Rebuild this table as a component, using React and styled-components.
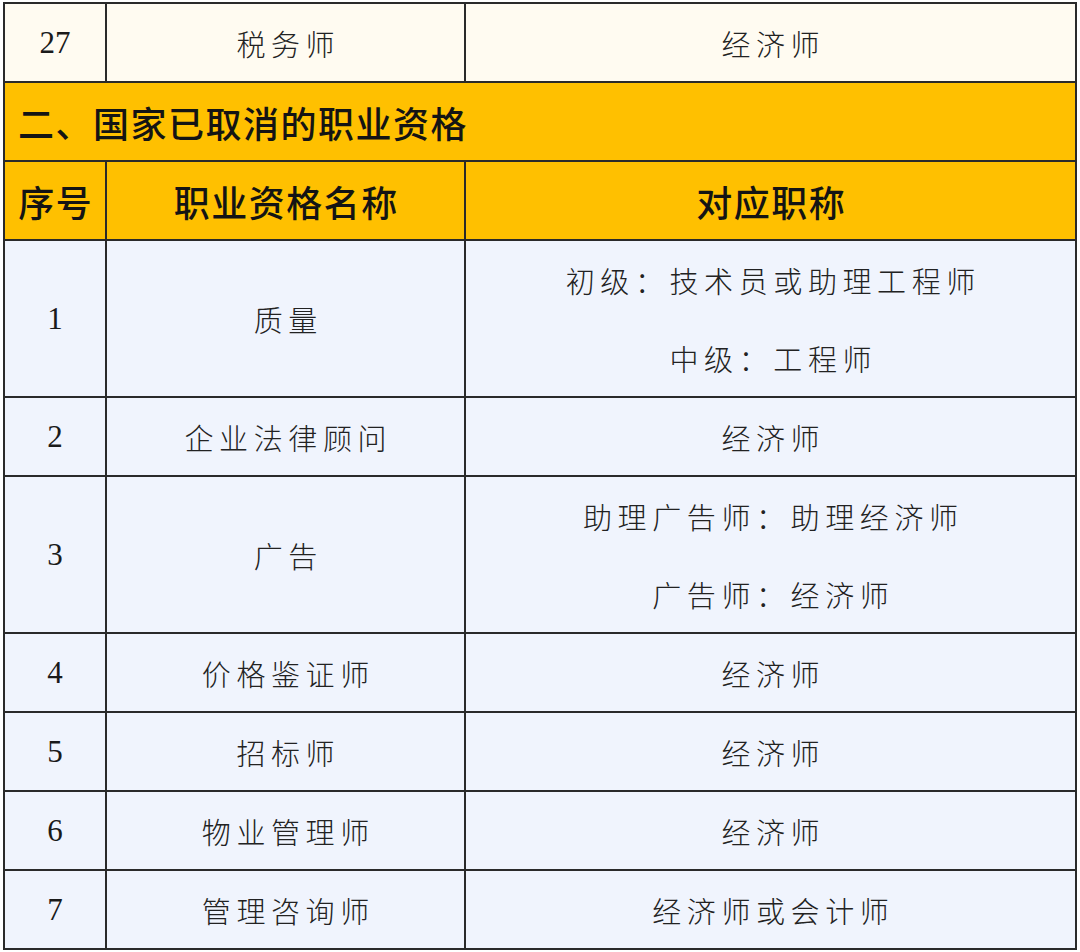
import React from "react";
import styled, { createGlobalStyle } from "styled-components";

const Global = createGlobalStyle`
  html, body { margin: 0; padding: 0; background: #ffffff; }
  body { font-family: "Noto Sans CJK SC", "Noto Sans", sans-serif; color: #1c1c1c; }
`;

const Table = styled.div`
  margin: 2px 0 0 3px;
  width: 1074px;
  box-sizing: border-box;
  border-top: 2px solid #2a2a2a;
  border-left: 2px solid #2a2a2a;
`;

const Row = styled.div`
  display: grid;
  grid-template-columns: 102px 359px 1fr;
  background: ${(p) => p.$bg};
`;

const Cell = styled.div`
  box-sizing: border-box;
  height: ${(p) => (p.$lines === 1 ? 79 : 157)}px;
  border-right: 2px solid #2a2a2a;
  border-bottom: 2px solid #2a2a2a;
  display: flex;
  flex-direction: column;
  align-items: center;
  justify-content: center;
  text-align: center;
`;

const Num = styled.span`
  font-family: "Liberation Serif", "DejaVu Serif", serif;
  font-size: 31px;
  color: #1a1a1a;
`;

const Text = styled.span`
  display: block;
  font-size: 29px;
  font-weight: 300;
  letter-spacing: 5.6px;
  margin-right: -5.6px;
  line-height: 78px;
  color: #222;
  white-space: nowrap;
`;

const Head = styled.span`
  font-size: 36px;
  font-weight: 500;
  color: #141414;
  letter-spacing: 1.5px;
  margin-right: -1.5px;
`;

const Section = styled.div`
  box-sizing: border-box;
  height: 79px;
  background: #ffc000;
  border-right: 2px solid #2a2a2a;
  border-bottom: 2px solid #2a2a2a;
  display: flex;
  align-items: center;
  padding-left: 13px;
  font-size: 36px;
  font-weight: 500;
  color: #141414;
  letter-spacing: 1.5px;
`;

const rows = [
  { n: "1", name: "质量", titles: ["初级：技术员或助理工程师", "中级：工程师"] },
  { n: "2", name: "企业法律顾问", titles: ["经济师"] },
  { n: "3", name: "广告", titles: ["助理广告师：助理经济师", "广告师：经济师"] },
  { n: "4", name: "价格鉴证师", titles: ["经济师"] },
  { n: "5", name: "招标师", titles: ["经济师"] },
  { n: "6", name: "物业管理师", titles: ["经济师"] },
  { n: "7", name: "管理咨询师", titles: ["经济师或会计师"] },
];

export default function App() {
  return (
    <>
      <Global />
      <Table>
        <Row $bg="#fffbf1">
          <Cell $lines={1}><Num>27</Num></Cell>
          <Cell $lines={1}><Text>税务师</Text></Cell>
          <Cell $lines={1}><Text>经济师</Text></Cell>
        </Row>
        <Section>二、国家已取消的职业资格</Section>
        <Row $bg="#ffc000">
          <Cell $lines={1}><Head>序号</Head></Cell>
          <Cell $lines={1}><Head>职业资格名称</Head></Cell>
          <Cell $lines={1}><Head>对应职称</Head></Cell>
        </Row>
        {rows.map((r) => (
          <Row key={r.n} $bg="#f0f4fd">
            <Cell $lines={r.titles.length}><Num>{r.n}</Num></Cell>
            <Cell $lines={r.titles.length}><Text>{r.name}</Text></Cell>
            <Cell $lines={r.titles.length}>
              {r.titles.map((t) => (
                <Text key={t}>{t}</Text>
              ))}
            </Cell>
          </Row>
        ))}
      </Table>
    </>
  );
}
